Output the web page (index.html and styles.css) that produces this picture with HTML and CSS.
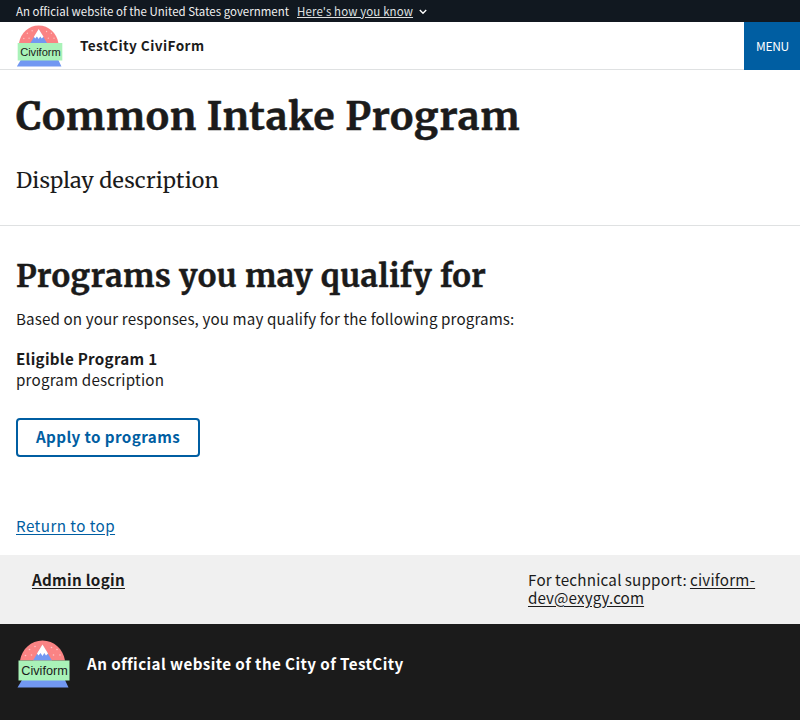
FILE: index.html
```html
<!DOCTYPE html>
<html lang="en">
<head>
<meta charset="utf-8">
<title>Common Intake Program</title>
<link rel="stylesheet" href="styles.css">
</head>
<body>
<div class="banner">
  <span class="banner-text">An official website of the United States government</span>
  <a class="banner-link" href="#">Here's how you know</a>
  <svg class="chevron" viewBox="0 0 8 6"><path d="M.8 1l3.200 3.200L7.200 1" fill="none" stroke="#fff" stroke-width="1.400"/></svg>
</div>
<header class="header">
  <svg class="logo" viewBox="0 0 54 48">
    <g id="logo">
      <path d="M3 20.500C5 9 14 .5 25.500 .5S46 9 48 20.500z" fill="#fa8384"/>
      <g fill="#fdc6c6"><circle cx="18" cy="6.500" r=".8"/><circle cx="12.500" cy="9.500" r=".8"/><circle cx="8.500" cy="15.500" r=".8"/><circle cx="14.500" cy="15" r=".8"/><circle cx="34.500" cy="7.500" r=".8"/><circle cx="40" cy="9.500" r=".8"/><circle cx="36.500" cy="15" r=".8"/><circle cx="43" cy="15" r=".8"/></g>
      <path d="M16 20.500L25.500 5 35 20.500z" fill="#7298f2"/>
      <path d="M25.500 4.500l5.500 9-2 2-1.700-2.500-1.800 3-2-3-2 2.500-1.500-2z" fill="#fff"/>
      <path d="M5 40h43l3.500 7.500H.5z" fill="#7298f2"/>
      <path d="M1.500 20.500h51v20h-51z" fill="#a9f2b8"/>
      <text x="4.300" y="35" class="logo-text" textLength="46.500" lengthAdjust="spacingAndGlyphs">Civiform</text>
    </g>
  </svg>
  <b class="site">TestCity CiviForm</b>
  <button class="menu">MENU</button>
</header>
<main>
  <section class="intro">
    <h1>Common Intake Program</h1>
    <p>Display description</p>
  </section>
  <section class="content">
    <h2>Programs you may qualify for</h2>
    <p class="based">Based on your responses, you may qualify for the following programs:</p>
    <h3>Eligible Program 1</h3>
    <p class="desc">program description</p>
    <a class="apply" href="#">Apply to programs</a>
  </section>
</main>
<footer>
  <div class="return"><a href="#">Return to top</a></div>
  <div class="support">
    <a class="admin" href="#">Admin login</a>
    <div class="contact"><span class="tech">For technical support: </span><a href="#">civiform-<br><span class="domain">dev@exygy.com</span></a></div>
  </div>
  <div class="identifier">
    <svg class="logo-large" viewBox="0 0 54 48"><use href="#logo"/></svg>
    <b>An official website of the City of TestCity</b>
  </div>
</footer>
</body>
</html>
```
FILE: styles.css
```css
* { box-sizing: border-box; }
body { margin: 0; background: #fff; color: #1b1b1b; font: 15.2px/21px "Source Sans Pro", "Noto Sans CJK JP", sans-serif; font-kerning: normal; }
h1, h2, h3, p { margin: 0; }
svg { display: block; flex: none; }
.banner { display: flex; align-items: center; height: 22px; padding-left: 16px; background: #111820; color: #f0f0f0; font-size: 11.46px; white-space: nowrap; }
.banner-text { width: 281px; letter-spacing: .025px; }
.banner-link { color: #dfe1e2; letter-spacing: .13px; text-underline-offset: 1px; }
.chevron { width: 8px; height: 6px; margin: 2px 0 0 6px; }
.header { display: flex; align-items: center; height: 48px; padding-left: 16px; border-bottom: 1px solid #dfe1e2; }
.logo { align-self: flex-start; width: 48px; height: 42px; margin: 3px 16px 0 0; }
.logo-text { font: 13px "Liberation Sans", sans-serif; fill: #1b1b1b; }
.site { font-size: 13.6px; letter-spacing: .42px; }
.menu { align-self: flex-start; width: 56px; height: 48px; margin-left: auto; padding: 0 0 2px 1px; border: 0; background: #005ea2; color: #fff; font: 12px "Source Sans Pro", "Noto Sans CJK JP", sans-serif; letter-spacing: -.3px; }
.intro { height: 156px; padding: 22px 16px 0; border-bottom: 1px solid #dfe1e2; }
h1, h2, .intro p { font-family: Merriweather, serif; }
h1 { font-size: 39.04px; line-height: 50px; letter-spacing: .7px; -webkit-text-stroke: .5px #1b1b1b; }
.intro p { margin-top: 22px; font-size: 21.5px; line-height: 34px; letter-spacing: .17px; }
.content { height: 277px; padding: 30px 16px 0; }
h2 { font-size: 31.2px; line-height: 40px; letter-spacing: .42px; -webkit-text-stroke: .4px #1b1b1b; }
.based { margin-top: 12px; letter-spacing: .11px; }
h3 { margin-top: 19px; font-size: 15.2px; line-height: 21px; letter-spacing: .27px; }
.desc { letter-spacing: .18px; }
.apply { display: flex; align-items: center; justify-content: center; width: 184px; height: 39px; margin-top: 28px; padding-bottom: 2px; border: 2px solid #005ea2; border-radius: 4px; color: #005ea2; font-weight: 700; letter-spacing: .4px; text-decoration: none; }
.return { height: 52px; padding: 12px 16px 0; letter-spacing: .43px; }
.return a { color: #005ea2; text-underline-offset: 2px; }
.support { display: flex; height: 69px; padding: 15px 16px 0 32px; background: #f0f0f0; line-height: 18px; }
.support a { color: #1b1b1b; text-underline-offset: 2px; }
.admin { width: 496px; font-weight: 700; letter-spacing: .3px; }
.contact { letter-spacing: .22px; white-space: nowrap; }
.tech { word-spacing: -.6px; }
.domain { letter-spacing: .1px; }
.identifier { display: flex; align-items: flex-start; height: 96px; padding: 16px 16px 0; background: #1b1b1b; color: #fff; line-height: 46px; letter-spacing: .41px; }
.logo-large { width: 54px; height: 48px; margin: 0 16px 0 1px; letter-spacing: 0; }
```
